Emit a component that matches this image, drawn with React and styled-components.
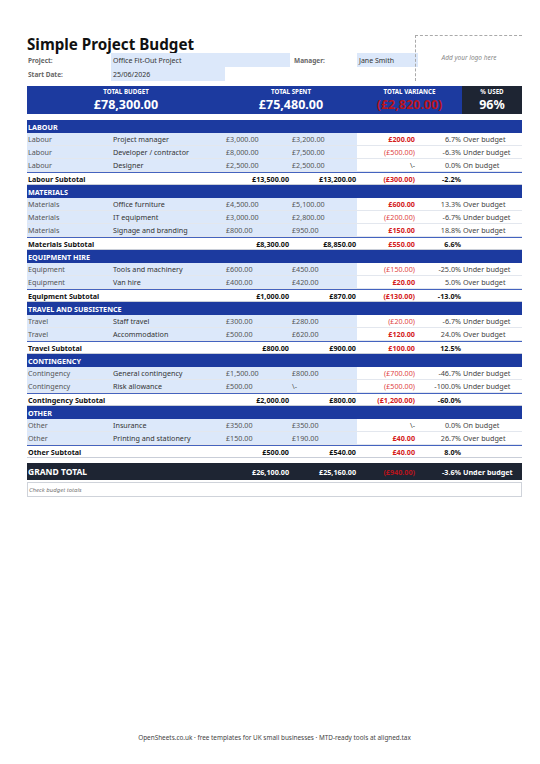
import React from 'react';
import styled, { createGlobalStyle } from 'styled-components';

// column widths shared by header, summary and table (A..G)
const COLS = '84px 114px 65px 67px 61px 44px 60px';

const GlobalStyle = createGlobalStyle`
  html, body { margin: 0; padding: 0; background: #ffffff; }
  body { font-family: "Noto Sans", "Open Sans", sans-serif; color: #333; }
`;

const Page = styled.div`
  width: 540px;
  height: 764px;
  box-sizing: border-box;
  padding: 35px 18px 22px 27px;
  display: flex;
  flex-direction: column;
`;

const Header = styled.div`
  display: grid;
  grid-template-columns: ${COLS};
  grid-template-rows: 18px 14px 14px;
`;

const Title = styled.h1`
  grid-column: 1 / 6;
  grid-row: 1;
  margin: 0;
  font-size: 15.2px;
  line-height: 18px;
  font-weight: 700;
  color: #111;
  align-self: end;
`;

const Label = styled.div`
  grid-column: ${p => p.$col};
  grid-row: ${p => p.$row};
  font-size: 6.5px;
  font-weight: 700;
  color: #666;
  display: flex;
  align-items: center;
  padding-left: ${p => p.$pad || 1}px;
`;

const Value = styled.div`
  grid-column: ${p => p.$col};
  grid-row: ${p => p.$row};
  background: #dce8fa;
  font-size: 7px;
  color: #333;
  display: flex;
  align-items: center;
  padding-left: 2px;
`;

const LogoBox = styled.div`
  grid-column: 6 / 8;
  grid-row: 1 / 4;
  margin-left: -3px;
  border-top: 1px dashed #aaa;
  border-left: 1px dashed #aaa;
  display: flex;
  align-items: flex-start;
  justify-content: center;
  padding-top: 17px;
  font-size: 6.5px;
  font-style: italic;
  color: #888;
`;

const Summary = styled.div`
  display: grid;
  grid-template-columns: 198px 132px 105px 60px;
  height: 28px;
  margin-top: 5px;
  background: #1c3a9f;
`;

const SumCell = styled.div`
  display: flex;
  flex-direction: column;
  align-items: center;
  justify-content: center;
  gap: 2px;
  background: ${p => (p.$dark ? '#1e2533' : 'transparent')};
`;

const SumLabel = styled.div`
  font-size: 6.2px;
  font-weight: 700;
  color: #ffffff;
  line-height: 8px;
`;

const SumValue = styled.div`
  font-size: 12.5px;
  font-weight: 700;
  line-height: 14px;
  color: ${p => (p.$red ? '#b8141c' : '#ffffff')};
`;

const Table = styled.div`
  margin-top: 6px;
  display: flex;
  flex-direction: column;
`;

const SectionHead = styled.div`
  height: 13px;
  background: #1c3a9f;
  color: #ffffff;
  font-size: 7.2px;
  font-weight: 700;
  display: flex;
  align-items: center;
  padding-left: 1px;
`;

const Row = styled.div`
  display: grid;
  grid-template-columns: ${COLS};
  height: 13px;
  box-sizing: border-box;
  border-bottom: 1px solid #e3e7ee;
`;

const SubRow = styled(Row)`
  border-top: 1.5px solid #4463bf;
  border-bottom: 1px solid #c9ced8;
  font-weight: 700;
  color: #111;
`;

const Cell = styled.div`
  display: flex;
  align-items: center;
  justify-content: ${p => (p.$right ? 'flex-end' : 'flex-start')};
  padding: 0 1px 0 ${p => (p.$indent ? 2 : 1)}px;
  font-size: 7.2px;
  white-space: nowrap;
  background: ${p => (p.$blue ? '#dce8fa' : 'transparent')};
  color: ${p => p.$color || 'inherit'};
  font-weight: ${p => (p.$bold ? 700 : 'inherit')};
`;

const Var = styled(Cell)`
  padding-right: 3px;
`;

const GrandRow = styled.div`
  display: grid;
  grid-template-columns: ${COLS};
  height: 17px;
  margin-top: 5px;
  background: #1e2533;
  color: #ffffff;
  font-weight: 700;
`;

const GrandLabel = styled.div`
  grid-column: 1 / 3;
  display: flex;
  align-items: center;
  padding-left: 1px;
  font-size: 8.5px;
  font-weight: 700;
`;

const CheckRow = styled.div`
  height: 15px;
  margin-top: 2px;
  box-sizing: border-box;
  border: 1px solid #cfd3da;
  display: flex;
  align-items: center;
  padding-left: 1px;
  font-size: 6px;
  font-style: italic;
  color: #777;
`;

const Footer = styled.div`
  margin-top: auto;
  text-align: center;
  font-size: 6.4px;
  color: #444;
  line-height: 8px;
`;

const RED = '#d42020';
const RED_SOFT = '#e04545';

const sections = [
  {
    name: 'LABOUR', cat: 'Labour',
    rows: [
      ['Project manager', '£3,000.00', '£3,200.00', '£200.00', 'over', '6.7%', 'Over budget'],
      ['Developer / contractor', '£8,000.00', '£7,500.00', '(£500.00)', 'under', '-6.3%', 'Under budget'],
      ['Designer', '£2,500.00', '£2,500.00', '\\-', 'zero', '0.0%', 'On budget'],
    ],
    sub: ['Labour Subtotal', '£13,500.00', '£13,200.00', '(£300.00)', '-2.2%'],
  },
  {
    name: 'MATERIALS', cat: 'Materials',
    rows: [
      ['Office furniture', '£4,500.00', '£5,100.00', '£600.00', 'over', '13.3%', 'Over budget'],
      ['IT equipment', '£3,000.00', '£2,800.00', '(£200.00)', 'under', '-6.7%', 'Under budget'],
      ['Signage and branding', '£800.00', '£950.00', '£150.00', 'over', '18.8%', 'Over budget'],
    ],
    sub: ['Materials Subtotal', '£8,300.00', '£8,850.00', '£550.00', '6.6%'],
  },
  {
    name: 'EQUIPMENT HIRE', cat: 'Equipment',
    rows: [
      ['Tools and machinery', '£600.00', '£450.00', '(£150.00)', 'under', '-25.0%', 'Under budget'],
      ['Van hire', '£400.00', '£420.00', '£20.00', 'over', '5.0%', 'Over budget'],
    ],
    sub: ['Equipment Subtotal', '£1,000.00', '£870.00', '(£130.00)', '-13.0%'],
  },
  {
    name: 'TRAVEL AND SUBSISTENCE', cat: 'Travel',
    rows: [
      ['Staff travel', '£300.00', '£280.00', '(£20.00)', 'under', '-6.7%', 'Under budget'],
      ['Accommodation', '£500.00', '£620.00', '£120.00', 'over', '24.0%', 'Over budget'],
    ],
    sub: ['Travel Subtotal', '£800.00', '£900.00', '£100.00', '12.5%'],
  },
  {
    name: 'CONTINGENCY', cat: 'Contingency',
    rows: [
      ['General contingency', '£1,500.00', '£800.00', '(£700.00)', 'under', '-46.7%', 'Under budget'],
      ['Risk allowance', '£500.00', '\\-', '(£500.00)', 'under', '-100.0%', 'Under budget'],
    ],
    sub: ['Contingency Subtotal', '£2,000.00', '£800.00', '(£1,200.00)', '-60.0%'],
  },
  {
    name: 'OTHER', cat: 'Other',
    rows: [
      ['Insurance', '£350.00', '£350.00', '\\-', 'zero', '0.0%', 'On budget'],
      ['Printing and stationery', '£150.00', '£190.00', '£40.00', 'over', '26.7%', 'Over budget'],
    ],
    sub: ['Other Subtotal', '£500.00', '£540.00', '£40.00', '8.0%'],
  },
];

const varStyle = kind => {
  if (kind === 'over') return { $color: RED, $bold: true };
  if (kind === 'under') return { $color: RED_SOFT };
  return { $color: '#444' };
};

export default function App() {
  return (
    <Page>
      <GlobalStyle />
      <Header>
        <Title>Simple Project Budget</Title>
        <Label $col="1" $row="2">Project:</Label>
        <Value $col="2 / 4" $row="2">Office Fit-Out Project</Value>
        <Label $col="4" $row="2" $pad={4}>Manager:</Label>
        <Value $col="5" $row="2">Jane Smith</Value>
        <Label $col="1" $row="3">Start Date:</Label>
        <Value $col="2" $row="3">25/06/2026</Value>
        <LogoBox>Add your logo here</LogoBox>
      </Header>

      <Summary>
        <SumCell>
          <SumLabel>TOTAL BUDGET</SumLabel>
          <SumValue>£78,300.00</SumValue>
        </SumCell>
        <SumCell>
          <SumLabel>TOTAL SPENT</SumLabel>
          <SumValue>£75,480.00</SumValue>
        </SumCell>
        <SumCell>
          <SumLabel>TOTAL VARIANCE</SumLabel>
          <SumValue $red>(£2,820.00)</SumValue>
        </SumCell>
        <SumCell $dark>
          <SumLabel>% USED</SumLabel>
          <SumValue>96%</SumValue>
        </SumCell>
      </Summary>

      <Table>
        {sections.map(sec => (
          <React.Fragment key={sec.name}>
            <SectionHead>{sec.name}</SectionHead>
            {sec.rows.map(r => (
              <Row key={r[0]}>
                <Cell $blue $color="#555">{sec.cat}</Cell>
                <Cell $blue $indent $color="#333">{r[0]}</Cell>
                <Cell $blue $color="#555">{r[1]}</Cell>
                <Cell $blue $indent $color="#555">{r[2]}</Cell>
                <Var $right {...varStyle(r[4])}>{r[3]}</Var>
                <Cell $right $color="#444">{r[5]}</Cell>
                <Cell $color="#444">{r[6]}</Cell>
              </Row>
            ))}
            <SubRow>
              <Cell>{sec.sub[0]}</Cell>
              <Cell />
              <Cell $right>{sec.sub[1]}</Cell>
              <Cell $right>{sec.sub[2]}</Cell>
              <Var $right $color={RED}>{sec.sub[3]}</Var>
              <Cell $right>{sec.sub[4]}</Cell>
              <Cell />
            </SubRow>
          </React.Fragment>
        ))}

        <GrandRow>
          <GrandLabel>GRAND TOTAL</GrandLabel>
          <Cell $right>£26,100.00</Cell>
          <Cell $right>£25,160.00</Cell>
          <Var $right $color="#b8141c">(£940.00)</Var>
          <Cell $right>-3.6%</Cell>
          <Cell>Under budget</Cell>
        </GrandRow>
        <CheckRow>Check budget totals</CheckRow>
      </Table>

      <Footer>
        OpenSheets.co.uk · free templates for UK small businesses · MTD-ready tools at aligned.tax
      </Footer>
    </Page>
  );
}
